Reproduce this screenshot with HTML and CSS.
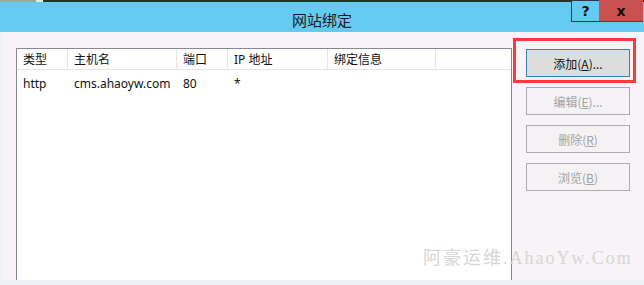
FILE: index.html
```html
<!DOCTYPE html>
<html lang="zh-CN">
<head>
    <meta charset="UTF-8">
    <title>网站绑定</title>
    <link rel="stylesheet" href="styles.css">
</head>
<body>
    <div class="window">
        <div class="frame-top"></div>
        <div class="title-bar">
            <span class="title">网站绑定</span>
            <div class="caption-buttons">
                <button class="cap-btn help-btn">?</button>
                <button class="cap-btn close-btn">x</button>
            </div>
        </div>

        <div class="dialog-body">
            <div class="list-view">
                <div class="list-row list-header">
                    <div class="col col-type">类型</div>
                    <div class="col col-host">主机名</div>
                    <div class="col col-port">端口</div>
                    <div class="col col-ip">IP 地址</div>
                    <div class="col col-info">绑定信息</div>
                </div>
                <div class="list-row">
                    <div class="col col-type">http</div>
                    <div class="col col-host">cms.ahaoyw.com</div>
                    <div class="col col-port">80</div>
                    <div class="col col-ip">*</div>
                    <div class="col col-info"></div>
                </div>
            </div>

            <div class="side-buttons">
                <button class="dlg-btn default-btn">添加(<u>A</u>)...</button>
                <button class="dlg-btn" disabled>编辑(<u>E</u>)...</button>
                <button class="dlg-btn" disabled>删除(<u>R</u>)</button>
                <button class="dlg-btn" disabled>浏览(<u>B</u>)</button>
            </div>
        </div>
        <div class="frame-bottom"></div>

        <!-- annotation + watermark drawn over the dialog -->
        <div class="highlight-box"></div>
        <div class="watermark">阿豪运维.AhaoYw.Com</div>
    </div>
</body>
</html>
```

FILE: styles.css
```css
body {
    margin: 0;
    padding: 0;
    background-color: #f7f3f7;
    font-family: 'Noto Sans', 'Noto Sans CJK SC', sans-serif;
    font-size: 12px;
}

.window {
    position: relative;
    width: 644px;
    height: 285px;
    display: flex;
    flex-direction: column;
    overflow: hidden;
    background-color: #f7f3f7;
}

.frame-top {
    height: 2px;
    background: linear-gradient(to right, #a3a3a3 0, #a3a3a3 36px, #e6e6e6 36px, #e6e6e6 43px, #2f2f2f 43px);
}

.title-bar {
    position: relative;
    height: 30px;
    background-color: #63caf0;
    display: flex;
    align-items: center;
    justify-content: center;
}

.title {
    font-family: 'Noto Sans CJK SC', sans-serif;
    font-size: 15px;
    color: #1a1a1a;
    padding-top: 4px;
}

.caption-buttons {
    position: absolute;
    top: -2px;
    right: 1px;
    display: flex;
}

.cap-btn {
    height: 22px;
    margin: 0;
    padding: 0;
    font-family: 'DejaVu Sans', sans-serif;
    font-weight: bold;
    font-size: 14px;
    color: #111;
    border: none;
}

.help-btn {
    width: 28px;
    background-color: #63caf0;
    border: 1px solid #2b3a40;
    border-right: none;
}

.close-btn {
    width: 44px;
    background-color: #c75050;
    border-bottom: 1px solid #7a3030;
}

.dialog-body {
    flex: 1;
    display: flex;
    padding: 16px 0 0 14px;
    border-left: 2px solid #eaf1f9;
}

.list-view {
    width: 494px;
    background-color: #fff;
    border: 1px solid #858a95;
    border-bottom: none;
}

.list-row {
    display: flex;
    height: 20px;
    align-items: center;
}

.list-header {
    height: 20px;
    border-bottom: 1px solid #e5e5e5;
    margin-bottom: 3px;
}

.col {
    box-sizing: border-box;
    padding-left: 6px;
    height: 100%;
    display: flex;
    align-items: center;
    color: #111;
    white-space: nowrap;
}

.list-header .col {
    border-right: 1px solid #e5e5e5;
}

.col-type { width: 51px; }
.col-host { width: 109px; }
.col-port { width: 51px; }
.col-ip { width: 100px; }
.col-info { width: 108px; }

.side-buttons {
    display: flex;
    flex-direction: column;
    gap: 10px;
    margin-left: 14px;
    padding-top: 1px;
}

.dlg-btn {
    width: 104px;
    height: 28px;
    margin: 0;
    padding: 0;
    font-family: 'Noto Sans CJK SC', sans-serif;
    font-size: 12px;
    background-color: #f4f2f4;
    border: 1px solid #adadad;
    color: #a3a3a3;
}

.default-btn {
    background-color: #dddddd;
    border-color: #3c7fb1;
    color: #111;
}

.frame-bottom {
    height: 5px;
    background-color: #eef0f6;
}

.highlight-box {
    position: absolute;
    left: 513px;
    top: 38px;
    width: 117px;
    height: 39px;
    border: 3px solid #f33c3c;
}

.watermark {
    position: absolute;
    left: 423px;
    top: 243px;
    font-family: 'Liberation Serif', 'Noto Sans CJK SC', serif;
    font-size: 18px;
    letter-spacing: 2px;
    color: #d6d6d6;
    white-space: nowrap;
}
```
